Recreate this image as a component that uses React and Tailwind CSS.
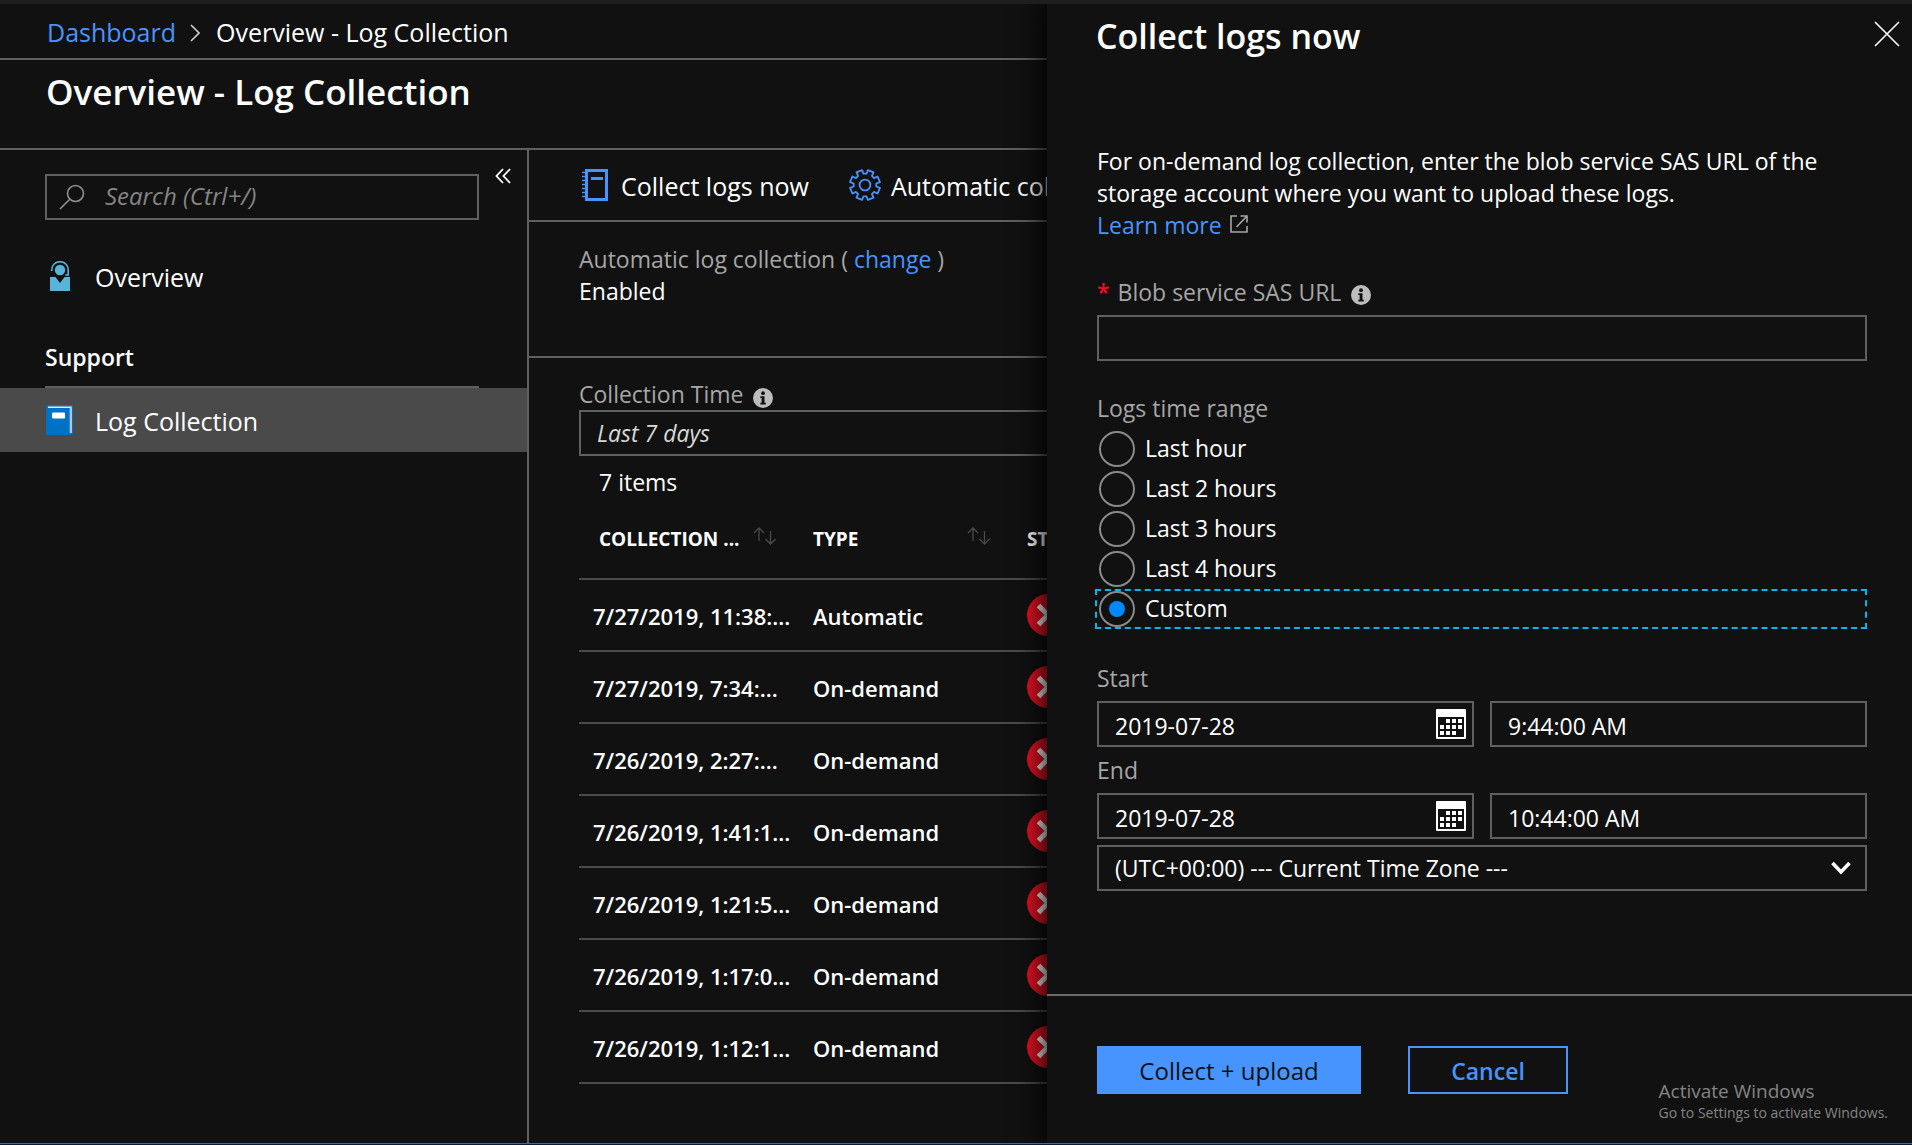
import { useState } from "react";

const rows = [
  { time: "7/27/2019, 11:38:...", type: "Automatic" },
  { time: "7/27/2019, 7:34:...", type: "On-demand" },
  { time: "7/26/2019, 2:27:...", type: "On-demand" },
  { time: "7/26/2019, 1:41:1...", type: "On-demand" },
  { time: "7/26/2019, 1:21:5...", type: "On-demand" },
  { time: "7/26/2019, 1:17:0...", type: "On-demand" },
  { time: "7/26/2019, 1:12:1...", type: "On-demand" },
];

const ranges = ["Last hour", "Last 2 hours", "Last 3 hours", "Last 4 hours", "Custom"];

const gearPath = (() => {
  const pts = [];
  const teeth = 8;
  for (let i = 0; i < teeth; i++) {
    const a = ((i + 0.5) / teeth) * Math.PI * 2;
    for (const [offset, radius] of [[-0.26, 11.4], [-0.2, 15.2], [0.2, 15.2], [0.26, 11.4]]) {
      pts.push(`${(16 + radius * Math.cos(a + offset)).toFixed(2)} ${(16 + radius * Math.sin(a + offset)).toFixed(2)}`);
    }
  }
  return `M${pts.join("L")}Z`;
})();

function GearIcon() {
  return (
    <svg className="size-8 shrink-0" viewBox="0 0 32 32" fill="none" stroke="#4894fe" strokeWidth="1.8" strokeLinejoin="round" aria-hidden="true">
      <path d={gearPath} />
      <circle cx="16" cy="16" r="5.4" />
    </svg>
  );
}

function NotebookIcon() {
  return (
    <svg className="h-8 w-7 shrink-0" viewBox="0 0 28 32" fill="none" stroke="#4894fe" aria-hidden="true">
      <path d="M5.5 1.5h20v29h-20z" strokeWidth="3" />
      <path d="M10 9.5h12" strokeWidth="3" />
      <path d="M1 3.5h4M1 7.5h4M1 11.5h4M1 15.5h4M1 19.5h4M1 23.5h4M1 27.5h4" strokeWidth="1.5" />
    </svg>
  );
}

function PersonIcon() {
  return (
    <svg className="h-[30px] w-7" viewBox="0 0 28 30" aria-hidden="true">
      <path d="M4 16h5.500l4.500 6 4.500-6H24v14H4z" fill="#59b4d9" />
      <circle cx="14" cy="9" r="5.200" fill="#59b4d9" />
      <path d="M5.800 10V8.500a8.200 7.800 0 0 1 16.400 0V14h-3" fill="none" stroke="#59b4d9" strokeWidth="1.600" />
    </svg>
  );
}

function BookIcon() {
  return (
    <svg className="h-[30px] w-7" viewBox="0 0 28 30" aria-hidden="true">
      <path d="M0 1.500Q0 0 1.500 0H27v27.500L25 30H1.500Q0 30 0 28.500z" fill="#0072c6" />
      <path d="M2 2.200H25V28" fill="none" stroke="#e6e6e6" strokeWidth="1.500" />
      <path d="M24.700 2.500V28" fill="none" stroke="#b5c4d2" strokeWidth="2" />
      <rect x="6" y="7.500" width="13" height="6" rx="1" fill="#fff" />
    </svg>
  );
}

function InfoIcon() {
  return (
    <svg className="mt-1.5 size-5" viewBox="0 0 20 20" aria-hidden="true">
      <circle cx="10" cy="10" r="10" fill="#bdbdbd" />
      <circle cx="10" cy="5.200" r="1.900" fill="#111" />
      <path d="M7.300 8.300h4.200v6.500h1.300v1.700H7.300v-1.700h1.300V10H7.300z" fill="#111" />
    </svg>
  );
}

function SortIcon() {
  return (
    <svg className="mb-1.5 h-[18px] w-6" viewBox="0 0 24 18" fill="none" stroke="#4a4a4a" strokeWidth="1.300" aria-hidden="true">
      <path d="M6 14V1M1 6l5-5 5 5M17.500 4v13M12.500 12l5 5 5-5" />
    </svg>
  );
}

function ErrorIcon() {
  return (
    <svg className="size-[42px]" viewBox="0 0 42 42" role="img" aria-label="Failed">
      <circle cx="21" cy="21" r="21" fill="#e81123" />
      <path d="M11.500 11.500l19 19M30.500 11.500l-19 19" stroke="#fff" strokeWidth="5" />
    </svg>
  );
}

function CalendarIcon() {
  const cells = [[1, 0], [2, 0], [3, 0], [0, 1], [1, 1], [2, 1], [3, 1], [0, 2], [1, 2], [2, 2]];
  return (
    <svg className="size-[30px]" viewBox="0 0 30 30" aria-hidden="true">
      <rect width="30" height="30" rx="1" fill="#fff" />
      <path d="M2 8h26v20H2z" fill="#111" />
      {cells.map(([c, r]) => (
        <rect key={`${c}-${r}`} x={4 + c * 6} y={10 + r * 6} width="4" height="4" fill="#fff" />
      ))}
    </svg>
  );
}

function DateTimeRow({ id, label, date, time }) {
  return (
    <div>
      <label htmlFor={`${id}-date`} className="block leading-8 text-[#a6a6a6]">{label}</label>
      <div className="mt-[7px] grid grid-cols-2 gap-4">
        <div className="flex h-[46px] items-center border-2 border-[#5f5f5f] pr-1.5 pl-4">
          <input id={`${id}-date`} type="text" defaultValue={date} className="min-w-0 flex-1 bg-transparent pt-1 outline-none" />
          <button type="button" aria-label={`Choose ${label.toLowerCase()} date`}>
            <CalendarIcon />
          </button>
        </div>
        <input
          type="text"
          aria-label={`${label} time`}
          defaultValue={time}
          className="h-[46px] w-full border-2 border-[#5f5f5f] bg-transparent px-4 pt-1 outline-none"
        />
      </div>
    </div>
  );
}

function Sidebar() {
  return (
    <nav className="w-[529px] shrink-0 border-r-2 border-[#5f5f5f] pt-6">
      <div className="flex items-start">
        <label className="ml-[45px] flex h-[46px] flex-1 items-center gap-5 border-2 border-[#5f5f5f] px-3">
          <svg className="size-[26px] shrink-0" viewBox="0 0 26 26" fill="none" stroke="#8f8f8f" strokeWidth="1.600" aria-hidden="true">
            <circle cx="16.500" cy="9.500" r="8" />
            <path d="M10.800 15.200L1 25" />
          </svg>
          <input
            type="text"
            aria-label="Search"
            placeholder="Search (Ctrl+/)"
            className="min-w-0 flex-1 bg-transparent pb-0.5 text-2xl italic outline-none placeholder:text-[#858585]"
          />
        </label>
        <button type="button" aria-label="Collapse menu" className="-mt-1.5 mr-4 ml-4 p-0">
          <svg className="h-4 w-4" viewBox="0 0 16 16" fill="none" stroke="#fff" strokeWidth="1.800" aria-hidden="true">
            <path d="M8 1L1.500 8 8 15M15 1L8.500 8 15 15" />
          </svg>
        </button>
      </div>
      <a href="#overview" className="mt-6 flex h-16 items-center gap-[21px] pl-[46px] text-[25px]">
        <PersonIcon />
        <span className="pt-1">Overview</span>
      </a>
      <h2 className="mr-12 ml-[45px] mt-8 flex h-12 items-center border-b-2 border-[#5f5f5f] pb-3 font-semibold">Support</h2>
      <a href="#log-collection" className="flex h-16 items-center gap-[21px] bg-[#4a4a4a] pl-[46px] text-[25px]">
        <BookIcon />
        <span className="pt-1">Log Collection</span>
      </a>
    </nav>
  );
}

function Content() {
  return (
    <main className="min-w-0 flex-1 overflow-hidden">
      <div className="flex h-[72px] items-center gap-10 border-b-2 border-[#5f5f5f] pl-[52px] text-[25px] whitespace-nowrap">
        <button type="button" className="flex items-center gap-3">
          <NotebookIcon />
          <span className="pt-1">Collect logs now</span>
        </button>
        <button type="button" className="flex items-center gap-2.5">
          <GearIcon />
          <span className="pt-1">Automatic coll</span>
        </button>
      </div>
      <section className="min-h-[136px] border-b-2 border-[#5f5f5f] px-[50px] pt-[21px] leading-8">
        <p className="text-[#a6a6a6]">
          Automatic log collection ( <a href="#change" className="text-[#4894fe]">change</a> )
        </p>
        <p>Enabled</p>
      </section>
      <section className="px-[50px] pt-[21px]">
        <div className="flex h-[31px] items-center gap-2.5 text-[#a6a6a6]">
          <label htmlFor="collection-time">Collection Time</label>
          <InfoIcon />
        </div>
        <select id="collection-time" className="block h-[46px] w-full appearance-none border-2 border-[#5f5f5f] bg-transparent px-4 text-[#d9d9d9] italic">
          <option>Last 7 days</option>
        </select>
        <p className="mt-2.5 mb-0.5 pl-5 leading-8">7 items</p>
        <table className="w-full table-fixed border-separate border-spacing-0 text-left whitespace-nowrap">
          <colgroup>
            <col className="w-[220px]" />
            <col className="w-[214px]" />
            <col />
          </colgroup>
          <thead>
            <tr className="text-[19px]">
              <th className="h-20 border-b-2 border-[#4a4a4a] pr-[22px] pl-5 font-bold">
                <span className="flex items-center justify-between">COLLECTION ... <SortIcon /></span>
              </th>
              <th className="h-20 border-b-2 border-[#4a4a4a] pr-[22px] pl-3.5 font-bold">
                <span className="flex items-center justify-between">TYPE <SortIcon /></span>
              </th>
              <th className="h-20 border-b-2 border-[#4a4a4a] pl-3.5 font-bold">STATUS</th>
            </tr>
          </thead>
          <tbody className="text-[22px] font-semibold">
            {rows.map((row) => (
              <tr key={row.time}>
                <td className="h-[72px] border-b-2 border-[#4a4a4a] pt-0.5 pl-3.5">{row.time}</td>
                <td className="h-[72px] border-b-2 border-[#4a4a4a] pt-0.5 pl-3.5">{row.type}</td>
                <td className="h-[72px] border-b-2 border-[#4a4a4a] pl-3.5"><ErrorIcon /></td>
              </tr>
            ))}
          </tbody>
        </table>
      </section>
    </main>
  );
}

function CollectPanel() {
  const [range, setRange] = useState("Custom");
  return (
    <aside className="absolute inset-y-0 right-0 flex w-[865px] flex-col bg-[#111] shadow-[0_0_28px_4px_#000]">
      <div className="flex items-start justify-between pt-3 pr-3 pl-[49px]">
        <h2 className="text-[34px] leading-10 font-semibold">Collect logs now</h2>
        <button type="button" aria-label="Close" className="mt-[5px]">
          <svg className="size-[26px]" viewBox="0 0 26 26" stroke="#fff" strokeWidth="1.600" aria-hidden="true">
            <path d="M1 1l24 24M25 1L1 25" />
          </svg>
        </button>
      </div>
      <form className="mt-[89px] pr-[45px] pl-[50px]">
        <p className="leading-8">
          For on-demand log collection, enter the blob service SAS URL of the storage account where you want to upload these logs.
        </p>
        <a href="#learn-more" className="flex items-center gap-2 leading-8 text-[#4894fe]">
          Learn more
          <svg className="mb-0.5 size-[18px]" viewBox="0 0 18 18" fill="none" stroke="#a6a6a6" strokeWidth="1.600" aria-hidden="true">
            <path d="M7 1H1v16h16v-6M10.500 1H17v6.500M17 1L6.500 12" />
          </svg>
        </a>
        <div className="mt-[35px] flex items-center gap-2.5 leading-8 text-[#a6a6a6]">
          <label htmlFor="sas-url"><span className="mr-2 font-semibold text-[#e81123]">*</span>Blob service SAS URL</label>
          <InfoIcon />
        </div>
        <input id="sas-url" type="text" className="mt-[7px] block h-[46px] w-full border-2 border-[#5f5f5f] bg-transparent px-4 outline-none" />

        <fieldset className="mt-[31px]">
          <legend className="mb-[5px] leading-8 text-[#a6a6a6]">Logs time range</legend>
          {ranges.map((name) => (
            <label
              key={name}
              className="-ml-0.5 flex h-10 items-center gap-2.5 border-2 border-dashed border-transparent pl-0.5 has-checked:border-[#00b7f0]"
            >
              <input
                type="radio"
                name="range"
                checked={range === name}
                onChange={() => setRange(name)}
                className="size-9 shrink-0 appearance-none rounded-full border-2 border-[#8a8a8a] bg-clip-content p-2 outline-none checked:bg-[#0089ff]"
              />
              <span className="pb-0.5">{name}</span>
            </label>
          ))}
        </fieldset>

        <div className="mt-[33px] flex flex-col gap-[7px]">
          <DateTimeRow id="start" label="Start" date="2019-07-28" time="9:44:00 AM" />
          <DateTimeRow id="end" label="End" date="2019-07-28" time="10:44:00 AM" />
        </div>
        <div className="relative mt-1.5">
          <select aria-label="Time zone" className="block h-[46px] w-full appearance-none border-2 border-[#5f5f5f] bg-transparent px-4 outline-none">
            <option>(UTC+00:00) --- Current Time Zone ---</option>
          </select>
          <svg className="pointer-events-none absolute top-4 right-4 h-3.5 w-5" viewBox="0 0 20 14" fill="none" stroke="#fff" strokeWidth="3.600" aria-hidden="true">
            <path d="M1.500 2L10 11l8.500-9" />
          </svg>
        </div>
      </form>
      <footer className="mt-auto flex gap-[47px] border-t-2 border-[#6a6a6a] pt-[50px] pb-[49px] pl-[50px]">
        <button type="button" className="h-12 w-[264px] bg-[#4894fe] pt-0.5 text-2xl text-[#111]">Collect + upload</button>
        <button type="button" className="h-12 w-40 border-2 border-[#4894fe] pt-0.5 font-semibold text-[#4894fe]">Cancel</button>
      </footer>
      <div className="pointer-events-none absolute right-6 bottom-5 text-[#858585]">
        <p className="text-[19px] leading-6">Activate Windows</p>
        <p className="text-sm leading-5">Go to Settings to activate Windows.</p>
      </div>
    </aside>
  );
}

export default function App() {
  return (
    <div className="flex min-h-screen flex-col border-t-4 border-[#1e1e1e] bg-[#111] font-['Open_Sans','Noto_Sans',sans-serif] text-[23px] text-white">
      <div className="relative flex flex-1 flex-col overflow-hidden">
        <nav aria-label="Breadcrumb" className="flex h-14 items-center border-b-2 border-[#5f5f5f] pt-1 pl-[47px] text-[25px]">
          <a href="#dashboard" className="text-[#4894fe]">Dashboard</a>
          <svg className="mr-4 ml-3.5 h-[18px] w-2.5" viewBox="0 0 10 18" fill="none" stroke="#d0d0d0" strokeWidth="1.600" aria-hidden="true">
            <path d="M1 1l8 8-8 8" />
          </svg>
          <span>Overview - Log Collection</span>
        </nav>
        <header className="border-b-2 border-[#5f5f5f] pt-3 pb-9 pl-[46px]">
          <h1 className="text-[35px] leading-10 font-semibold">Overview - Log Collection</h1>
        </header>
        <div className="flex flex-1">
          <Sidebar />
          <Content />
        </div>
        <CollectPanel />
      </div>
      <div className="h-0.5 border-t border-[#1b76bd] bg-[#0a1a38]" />
    </div>
  );
}
